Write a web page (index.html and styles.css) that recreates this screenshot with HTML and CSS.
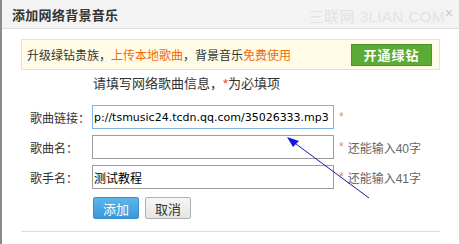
FILE: index.html
```html
<!DOCTYPE html>
<html lang="zh-CN">
<head>
    <meta charset="UTF-8">
    <title>添加网络背景音乐</title>
    <link rel="stylesheet" href="styles.css">
</head>
<body>
    <div class="dialog">
        <header class="dialog-header">
            <h1>添加网络背景音乐</h1>
            <span class="watermark">三联网 3LIAN.COM</span>
            <span class="close-btn">×</span>
        </header>

        <div class="dialog-body">
            <div class="notice">
                <p>升级绿钻贵族，<span class="hl">上传本地歌曲</span>，背景音乐<span class="hl">免费使用</span></p>
                <button type="button" class="btn-green">开通绿钻</button>
            </div>

            <form class="song-form">
                <p class="form-tip">请填写网络歌曲信息，<span class="req">*</span>为必填项</p>

                <div class="form-row">
                    <label for="song-url">歌曲链接：</label>
                    <input type="text" id="song-url" class="focused" value="p://tsmusic24.tcdn.qq.com/35026333.mp3">
                    <span class="star">*</span>
                </div>
                <div class="form-row">
                    <label for="song-name">歌曲名：</label>
                    <input type="text" id="song-name" value="">
                    <span class="star">*</span>
                    <span class="hint">还能输入40字</span>
                </div>
                <div class="form-row">
                    <label for="singer">歌手名：</label>
                    <input type="text" id="singer" value="测试教程">
                    <span class="star">*</span>
                    <span class="hint">还能输入41字</span>
                </div>

                <div class="form-actions">
                    <button type="button" class="btn-add">添加</button>
                    <button type="button" class="btn-cancel">取消</button>
                </div>
            </form>

            <hr class="sep">
        </div>

        <!-- hand drawn arrow pointing at the song name field -->
        <svg class="arrow" width="459" height="244" viewBox="0 0 459 244">
            <line x1="292" y1="141" x2="369" y2="198" stroke="#1a1a9a" stroke-width="1"/>
            <polygon points="287,137 299,141 293,147" fill="#1515e0"/>
        </svg>
    </div>
</body>
</html>
```

FILE: styles.css
```css
/* reset */
html, body {
    margin: 0;
    padding: 0;
    background: #fff;
    font-family: "Liberation Sans", "Noto Sans CJK SC", sans-serif;
    color: #333;
    font-size: 12px;
}

.dialog {
    position: relative;
    width: 459px;
    height: 244px;
    border-left: 2px solid #8a8a8a;
    box-sizing: border-box;
    overflow: hidden;
}

/* header */
.dialog-header {
    position: relative;
    height: 28px;
    background: #f3f3f3;
    border-bottom: 1px solid #dedede;
    display: flex;
    align-items: center;
    padding-left: 10px;
}
.dialog-header h1 {
    margin: 0;
    font-size: 13px;
    font-weight: bold;
    color: #333;
    letter-spacing: 0.3px;
}
.watermark {
    position: absolute;
    right: 14px;
    top: 5px;
    font-size: 15px;
    color: #e2e2e2;
    letter-spacing: 0.5px;
}
.close-btn {
    position: absolute;
    right: 6px;
    top: 5px;
    font-size: 14px;
    color: #c8c8c8;
}

/* body */
.dialog-body {
    padding: 10px 19px 0 19px;
}

.notice {
    height: 31px;
    box-sizing: border-box;
    background: #fffbe6;
    border: 1px solid #f3e3a8;
    display: flex;
    align-items: center;
    justify-content: space-between;
    padding: 0 7px 0 5px;
}
.notice p {
    margin: 0;
    font-size: 12px;
    color: #333;
}
.notice .hl {
    color: #f26a0a;
}
.btn-green {
    width: 81px;
    height: 22px;
    padding: 0;
    border: 1px solid #4a9726;
    background: #5bab35;
    color: #fff;
    font-family: inherit;
    font-size: 13px;
    font-weight: bold;
    letter-spacing: 1px;
}

/* form */
.song-form {
    padding-left: 9px;
}
.form-tip {
    margin: 5px 0 0 63px;
    height: 18px;
    line-height: 18px;
    font-size: 13px;
    color: #333;
}
.form-tip .req {
    color: #e8402a;
}

.form-row {
    display: flex;
    align-items: center;
    height: 24px;
    margin-top: 6px;
}
.form-row:first-of-type {
    margin-top: 12px;
}
.form-row label {
    width: 62px;
    flex-shrink: 0;
    font-size: 12px;
    color: #333;
}
.form-row input {
    width: 242px;
    height: 24px;
    box-sizing: border-box;
    border: 1px solid #9c9c9c;
    padding: 0 1px;
    font-family: "DejaVu Sans", "Noto Sans CJK SC", sans-serif;
    font-size: 11px;
    color: #000;
    outline: none;
}
#singer {
    font-family: "Noto Sans CJK SC", sans-serif;
    font-size: 12px;
}
.form-row input.focused {
    border-color: #7fb2e5;
}
.star {
    margin-left: 5px;
    color: #f08a60;
    font-size: 12px;
}
.hint {
    margin-left: 4px;
    color: #666;
    font-size: 12px;
}

.form-actions {
    display: flex;
    gap: 6px;
    margin: 8px 0 0 63px;
}
.form-actions button {
    width: 46px;
    height: 22px;
    padding: 0;
    font-family: inherit;
    font-size: 13px;
    border-radius: 2px;
}
.btn-add {
    background: linear-gradient(#5cb6ea, #3a98d8);
    border: 1px solid #3a8ccc;
    color: #fff;
}
.btn-cancel {
    background: linear-gradient(#f8f8f8, #e4e4e4);
    border: 1px solid #b0b0b0;
    color: #333;
}

.sep {
    margin: 12px 0 0 0;
    border: 0;
    border-top: 1px solid #dedede;
}

/* overlay arrow */
.arrow {
    position: absolute;
    left: -2px;
    top: 0;
    pointer-events: none;
}
```
